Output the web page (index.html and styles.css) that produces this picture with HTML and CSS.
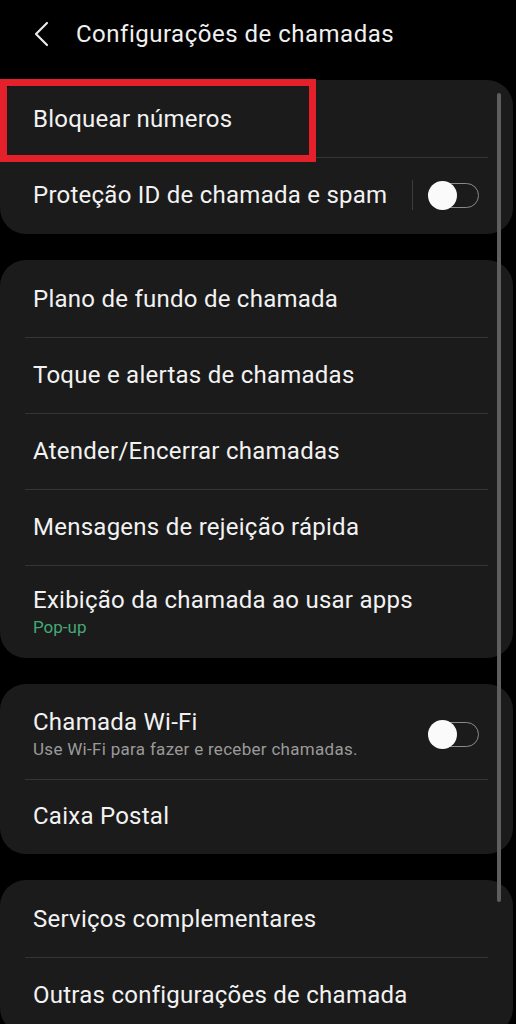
FILE: index.html
```html
<!DOCTYPE html>
<html lang="pt-BR">
<head>
<meta charset="utf-8">
<title>Configurações de chamadas</title>
<link rel="stylesheet" href="styles.css">
</head>
<body>
<div class="screen">
  <header class="topbar">
    <svg class="back" width="16" height="26" viewBox="0 0 16 26"><path d="M13 2 L2 13 L13 24" fill="none" stroke="#e8e8e8" stroke-width="2.2" stroke-linecap="round" stroke-linejoin="round"/></svg>
    <h1 class="title">Configurações de chamadas</h1>
  </header>

  <section class="card">
    <div class="row"><span class="label">Bloquear números</span></div>
    <div class="row">
      <span class="label grow">Proteção ID de chamada e spam</span>
      <span class="vsep"></span>
      <span class="switch"><span class="thumb"></span></span>
    </div>
  </section>

  <section class="card">
    <div class="row"><span class="label">Plano de fundo de chamada</span></div>
    <div class="row"><span class="label">Toque e alertas de chamadas</span></div>
    <div class="row"><span class="label">Atender/Encerrar chamadas</span></div>
    <div class="row"><span class="label">Mensagens de rejeição rápida</span></div>
    <div class="row two">
      <div class="grow">
        <div class="label">Exibição da chamada ao usar apps</div>
        <div class="sub green">Pop-up</div>
      </div>
    </div>
  </section>

  <section class="card">
    <div class="row two wifi">
      <div class="grow">
        <div class="label">Chamada Wi-Fi</div>
        <div class="sub">Use Wi-Fi para fazer e receber chamadas.</div>
      </div>
      <span class="switch"><span class="thumb"></span></span>
    </div>
    <div class="row short"><span class="label">Caixa Postal</span></div>
  </section>

  <section class="card">
    <div class="row"><span class="label">Serviços complementares</span></div>
    <div class="row"><span class="label">Outras configurações de chamada</span></div>
  </section>

  <div class="highlight"></div>
  <div class="scrollbar"></div>
</div>
</body>
</html>
```

FILE: styles.css
```css
* { box-sizing: border-box; }
html, body {
  margin: 0;
  padding: 0;
  background: #000;
}
body {
  font-family: Roboto, "Noto Sans", "Liberation Sans", sans-serif;
  color: #f2f2f2;
}
.screen {
  position: relative;
  width: 516px;
  height: 1024px;
  overflow: hidden;
  display: flex;
  flex-direction: column;
  gap: 26px;
}
.screen > * { flex: none; }
.topbar {
  height: 80px;
  margin-bottom: -26px;
  display: flex;
  align-items: center;
  padding: 0 0 12px 34px;
}
.back { margin-right: 26px; }
.title {
  margin: 0;
  font-size: 24px;
  font-weight: 400;
  color: #f0f0f0;
  letter-spacing: 0.5px;
}
.card {
  width: 513px;
  background: #1b1b1b;
  border-radius: 26px;
  padding: 1px 0;
}
.row {
  position: relative;
  min-height: 76px;
  display: flex;
  align-items: center;
  padding: 0 34px 0 33px;
}
.row + .row::before {
  content: "";
  position: absolute;
  left: 25px;
  right: 25px;
  top: 0;
  height: 1px;
  background: #353535;
}
.row.two { min-height: 92px; padding-top: 2px; }
.row.wifi { min-height: 94px; padding-top: 4px; }
.row.short { min-height: 74px; }
.grow { flex: 1; }
.label {
  font-size: 24px;
  line-height: 30px;
  letter-spacing: 0.25px;
  color: #f2f2f2;
}
.sub {
  font-size: 17px;
  line-height: 24px;
  letter-spacing: 0.3px;
  color: #9a9a9a;
}
.sub.green { color: #46a878; letter-spacing: 0; }
.vsep {
  width: 1px;
  height: 30px;
  background: #3d3d3d;
  margin-right: 16px;
}
.switch {
  position: relative;
  width: 50px;
  height: 25px;
  border: 1.5px solid #8a8a8a;
  border-radius: 13px;
}
.thumb {
  position: absolute;
  left: -2px;
  top: 50%;
  width: 29px;
  height: 29px;
  margin-top: -14.5px;
  border-radius: 50%;
  background: #fafafa;
}
.highlight {
  position: absolute;
  left: 0;
  top: 79px;
  width: 316px;
  height: 83px;
  border: 7px solid #e4202b;
}
.scrollbar {
  position: absolute;
  left: 497px;
  top: 93px;
  width: 4px;
  height: 809px;
  border-radius: 2px;
  background: #5e5e5e;
}
```
